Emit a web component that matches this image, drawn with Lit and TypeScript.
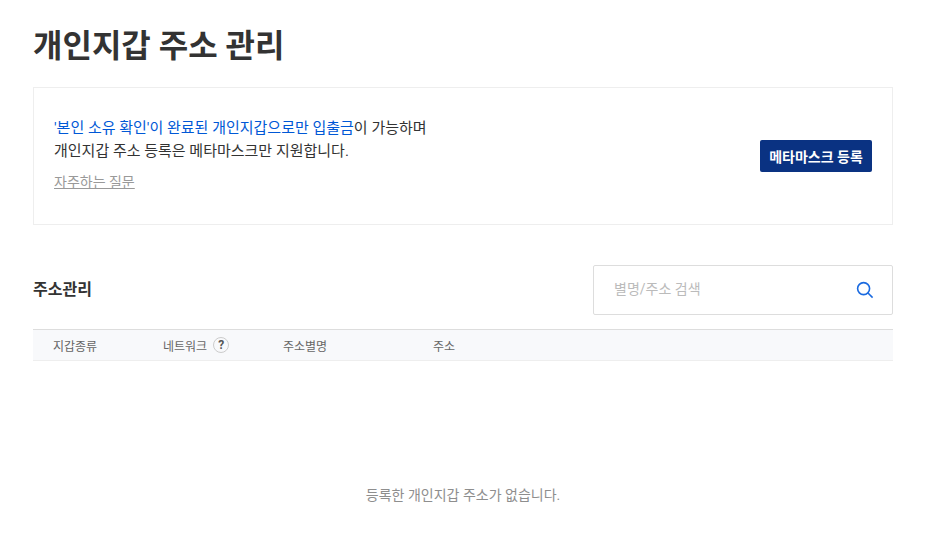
import { LitElement, html, css } from "lit";
import { customElement } from "lit/decorators.js";

@customElement("app-root")
export class AppRoot extends LitElement {
  static styles = css`
    :host { display: block; width: 929px; height: 533px; overflow: hidden; background: #fff; font-family: Roboto, "Noto Sans CJK KR", sans-serif; color: #333; }
    .page { width: 860px; margin-left: 33px; display: flex; flex-direction: column; }
    h1 { margin: 0; padding-top: 21px; height: 87px; box-sizing: border-box; font-size: 32px; line-height: 50px; font-weight: 700; color: #333; }
    .notice { height: 138px; box-sizing: border-box; border: 1px solid #eee; padding: 0 20px; display: flex; align-items: center; justify-content: space-between; }
    .text { margin-bottom: 2px; }
    .msg { font-size: 15px; line-height: 23px; color: #333; margin: 0; }
    .blue { color: #0058d6; }
    .faq { display: block; margin-top: 8px; font-size: 14px; line-height: 23px; color: #999; text-decoration: underline; }
    .btn { height: 32px; width: 112px; border: 0; border-radius: 2px; background: #0a3282; color: #fff; font: 700 14px Roboto, "Noto Sans CJK KR", sans-serif; padding: 0; }
    .bar { margin-top: 40px; display: flex; align-items: center; justify-content: space-between; height: 50px; }
    h2 { margin: 0 0 4px; font-size: 16px; font-weight: 700; color: #333; }
    .search { width: 300px; height: 50px; box-sizing: border-box; border: 1px solid #ddd; border-radius: 2px; padding: 0 18px 0 20px; display: flex; align-items: center; justify-content: space-between; font-size: 14px; color: #bbb; }
    .search span { margin-bottom: 4px; }
    .search svg { display: block; }
    .head { margin-top: 14px; height: 32px; box-sizing: border-box; border-top: 1px solid #ddd; border-bottom: 1px solid #eee; background: #f8f9fb; display: grid; grid-template-columns: 130px 120px 150px 1fr; align-items: center; font-size: 12px; color: #666; }
    .head > span { display: flex; align-items: center; gap: 6px; }
    .head > span:first-child { padding-left: 20px; }
    .q { width: 16px; height: 16px; box-sizing: border-box; border: 1px solid #ccc; border-radius: 50%; display: flex; align-items: center; justify-content: center; font-size: 12px; font-weight: 700; font-style: normal; color: #555; line-height: 1; }
    .empty { margin: 0; padding-top: 124px; text-align: center; font-size: 14px; line-height: 20px; color: #8e8e8e; }
  `;

  render() {
    return html`
      <div class="page">
        <h1>개인지갑 주소 관리</h1>
        <section class="notice">
          <div class="text">
            <p class="msg"><span class="blue">'본인 소유 확인'이 완료된 개인지갑으로만 입출금</span>이 가능하며<br />개인지갑 주소 등록은 메타마스크만 지원합니다.</p>
            <a class="faq">자주하는 질문</a>
          </div>
          <button class="btn">메타마스크 등록</button>
        </section>
        <div class="bar">
          <h2>주소관리</h2>
          <div class="search">
            <span>별명/주소 검색</span>
            <svg width="18" height="18" viewBox="0 0 18 18" fill="none" stroke="#1a6ae0" stroke-width="1.6"><circle cx="7.6" cy="7.6" r="6"/><path d="M12 12L16.6 16.6"/></svg>
          </div>
        </div>
        <div class="head">
          <span>지갑종류</span>
          <span>네트워크 <i class="q">?</i></span>
          <span>주소별명</span>
          <span>주소</span>
        </div>
        <p class="empty">등록한 개인지갑 주소가 없습니다.</p>
      </div>
    `;
  }
}
